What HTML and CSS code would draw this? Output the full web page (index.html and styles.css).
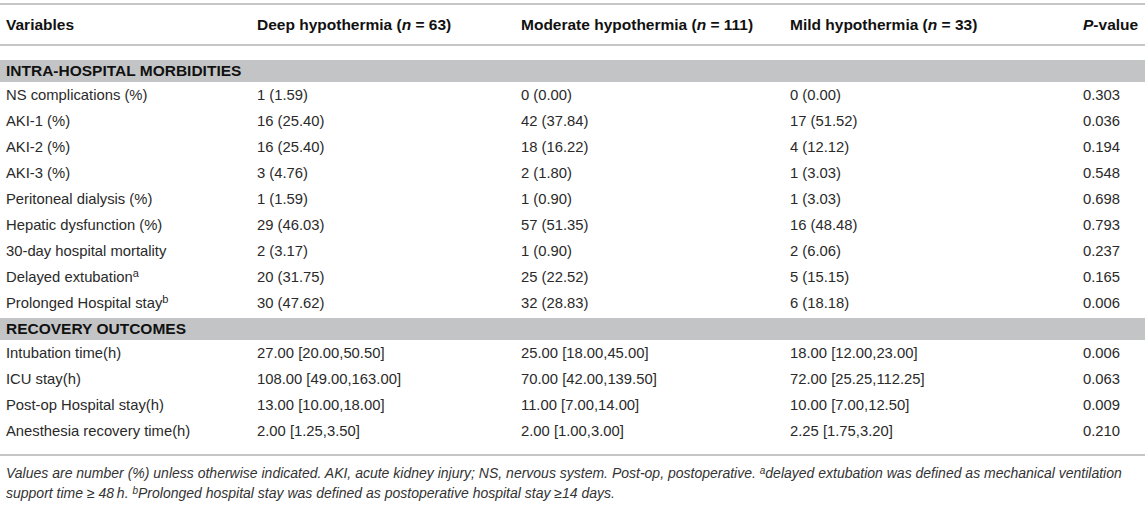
FILE: index.html
```html
<!DOCTYPE html>
<html lang="en">
<head>
    <meta charset="UTF-8">
    <title>Table 3</title>
    <link rel="stylesheet" href="styles.css">
</head>
<body>
    <div class="table">
        <div class="row head">
            <div>Variables</div>
            <div>Deep hypothermia (<i>n</i> = 63)</div>
            <div>Moderate hypothermia (<i>n</i> = 111)</div>
            <div>Mild hypothermia (<i>n</i> = 33)</div>
            <div><i>P</i>-value</div>
        </div>

        <div class="section first">INTRA-HOSPITAL MORBIDITIES</div>
        <div class="row"><div>NS complications (%)</div><div>1 (1.59)</div><div>0 (0.00)</div><div>0 (0.00)</div><div>0.303</div></div>
        <div class="row"><div>AKI-1 (%)</div><div>16 (25.40)</div><div>42 (37.84)</div><div>17 (51.52)</div><div>0.036</div></div>
        <div class="row"><div>AKI-2 (%)</div><div>16 (25.40)</div><div>18 (16.22)</div><div>4 (12.12)</div><div>0.194</div></div>
        <div class="row"><div>AKI-3 (%)</div><div>3 (4.76)</div><div>2 (1.80)</div><div>1 (3.03)</div><div>0.548</div></div>
        <div class="row"><div>Peritoneal dialysis (%)</div><div>1 (1.59)</div><div>1 (0.90)</div><div>1 (3.03)</div><div>0.698</div></div>
        <div class="row"><div>Hepatic dysfunction (%)</div><div>29 (46.03)</div><div>57 (51.35)</div><div>16 (48.48)</div><div>0.793</div></div>
        <div class="row"><div>30-day hospital mortality</div><div>2 (3.17)</div><div>1 (0.90)</div><div>2 (6.06)</div><div>0.237</div></div>
        <div class="row"><div>Delayed extubation<sup>a</sup></div><div>20 (31.75)</div><div>25 (22.52)</div><div>5 (15.15)</div><div>0.165</div></div>
        <div class="row"><div>Prolonged Hospital stay<sup>b</sup></div><div>30 (47.62)</div><div>32 (28.83)</div><div>6 (18.18)</div><div>0.006</div></div>

        <div class="section">RECOVERY OUTCOMES</div>
        <div class="row"><div>Intubation time(h)</div><div>27.00 [20.00,50.50]</div><div>25.00 [18.00,45.00]</div><div>18.00 [12.00,23.00]</div><div>0.006</div></div>
        <div class="row"><div>ICU stay(h)</div><div>108.00 [49.00,163.00]</div><div>70.00 [42.00,139.50]</div><div>72.00 [25.25,112.25]</div><div>0.063</div></div>
        <div class="row"><div>Post-op Hospital stay(h)</div><div>13.00 [10.00,18.00]</div><div>11.00 [7.00,14.00]</div><div>10.00 [7.00,12.50]</div><div>0.009</div></div>
        <div class="row"><div>Anesthesia recovery time(h)</div><div>2.00 [1.25,3.50]</div><div>2.00 [1.00,3.00]</div><div>2.25 [1.75,3.20]</div><div>0.210</div></div>
    </div>

    <p class="notes">Values are number (%) unless otherwise indicated. AKI, acute kidney injury; NS, nervous system. Post-op, postoperative. <sup>a</sup>delayed extubation was defined as mechanical ventilation<br>support time ≥ 48&#8201;h. <sup>b</sup>Prolonged hospital stay was defined as postoperative hospital stay ≥14 days.</p>
</body>
</html>
```

FILE: styles.css
```css
body {
    margin: 0;
    padding-top: 3px;
    font-family: "Liberation Sans", Arial, sans-serif;
    font-size: 14.8px;
    color: #2a2a2a;
    background: #fff;
}
.table {
    width: 1145px;
}
.row {
    display: grid;
    grid-template-columns: 251px 264px 269px 293px 1fr;
    height: 26px;
    align-items: center;
}
.row > div {
    padding-left: 6px;
    white-space: nowrap;
}
.head {
    height: 39px;
    border-top: 2px solid #c6c6c6;
    border-bottom: 2px solid #c6c6c6;
    font-size: 15.5px;
    font-weight: bold;
    color: #111;
}
.section {
    margin-top: 2px;
    height: 22px;
    line-height: 22px;
    padding-left: 6px;
    background: #c3c4c6;
    font-size: 15.5px;
    font-weight: bold;
    color: #111;
}
.section.first {
    margin-top: 14px;
}
sup {
    font-size: 11px;
    line-height: 0;
    vertical-align: 5px;
}
.notes {
    margin: 10px 0 0;
    padding: 7px 6px 0;
    border-top: 2px solid #c6c6c6;
    font-style: italic;
    font-size: 14px;
    line-height: 20px;
    color: #333;
}
.notes sup {
    font-size: 10px;
    vertical-align: 4px;
}
```
